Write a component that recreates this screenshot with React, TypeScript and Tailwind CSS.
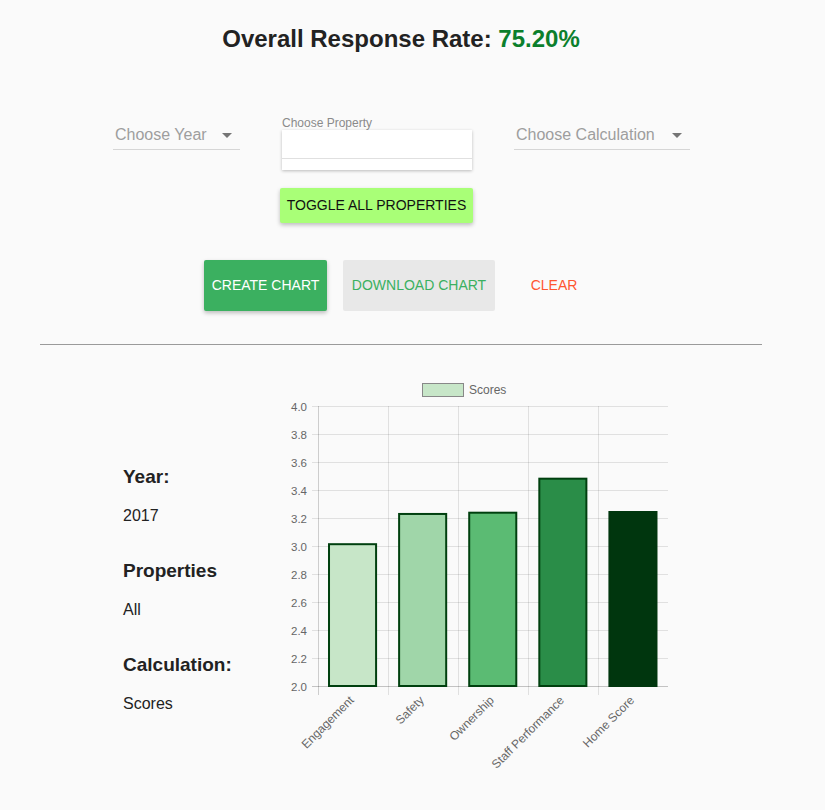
import React from 'react';

const bars = [
    { label: 'Engagement', value: 3.02, fill: '#c7e6c8', stroke: '#00400f' },
    { label: 'Safety', value: 3.236, fill: '#a0d6a9', stroke: '#00400f' },
    { label: 'Ownership', value: 3.245, fill: '#5bbb73', stroke: '#00400f' },
    { label: 'Staff Performance', value: 3.488, fill: '#2a8d48', stroke: '#00400f' },
    { label: 'Home Score', value: 3.25, fill: '#00360e', stroke: '#00360e' },
];

const ticks = [4.0, 3.8, 3.6, 3.4, 3.2, 3.0, 2.8, 2.6, 2.4, 2.2, 2.0];

const left = 317.5;
const right = 668;
const bottom = 686;
const yOf = (v: number) => bottom - (v - 2) * 140;

const Caret = () => (
    <svg width="10" height="5" viewBox="0 0 10 5" className="shrink-0">
        <path d="M0 0 L10 0 L5 5 Z" fill="#757575" />
    </svg>
);

const Chart = () => {
    const cw = (right - left) / bars.length;
    return (
        <svg width="410" height="410" viewBox="270 370 410 410" className="block">
            {/* legend */}
            <rect x="422.5" y="383.5" width="41" height="13" fill="#c7e6c8" stroke="#888" strokeWidth="1" />
            <text x="469" y="393.5" fontSize="12" fill="#666" fontFamily="Liberation Sans, Arial, sans-serif">Scores</text>

            {/* horizontal grid + y labels */}
            {ticks.map((t) => {
                const y = Math.round(yOf(t)) + 0.5;
                return (
                    <g key={t}>
                        <line x1="312" x2={right} y1={y} y2={y} stroke={t === 2 ? 'rgba(0,0,0,0.22)' : 'rgba(0,0,0,0.1)'} />
                        <text x="307" y={y + 4} textAnchor="end" fontSize="11.5" fill="#666" fontFamily="Liberation Sans, Arial, sans-serif">
                            {t.toFixed(1)}
                        </text>
                    </g>
                );
            })}

            {/* vertical grid */}
            {[0, 1, 2, 3, 4].map((i) => {
                const x = Math.round(left + i * cw) + 0.5;
                return <line key={i} x1={x} x2={x} y1="406" y2="695" stroke={i === 0 ? 'rgba(0,0,0,0.18)' : 'rgba(0,0,0,0.1)'} />;
            })}

            {/* bars */}
            {bars.map((b, i) => {
                const cx = left + i * cw + cw / 2;
                const w = cw * 0.7;
                const top = yOf(b.value);
                return (
                    <rect
                        key={b.label}
                        x={cx - w / 2 + 1}
                        y={top + 1}
                        width={w - 2}
                        height={bottom - top - 1}
                        fill={b.fill}
                        stroke={b.stroke}
                        strokeWidth="2"
                    />
                );
            })}

            {/* x labels */}
            {bars.map((b, i) => {
                const cx = left + i * cw + cw / 2 + 2;
                const y = 701;
                return (
                    <text
                        key={b.label}
                        x={cx}
                        y={y}
                        textAnchor="end"
                        fontSize="12"
                        fill="#666"
                        fontFamily="Liberation Sans, Arial, sans-serif"
                        transform={`rotate(-45 ${cx} ${y})`}
                    >
                        {b.label}
                    </text>
                );
            })}
        </svg>
    );
};

export default function App() {
    return (
        <div className="min-h-[810px] w-[825px] bg-[#fafafa] font-['Liberation_Sans',Arial,sans-serif] text-[#222]">
            <h1 className="pr-[23px] pt-[25px] text-center text-[24px] font-bold leading-[28px]">
                Overall Response Rate: <span className="text-[#0b7f2c]">75.20%</span>
            </h1>

            {/* selectors */}
            <div className="mt-[54px] flex items-start pl-[113px]">
                <div className="mt-[14px] flex h-[29px] w-[127px] items-center justify-between border-b border-[#d6d6d6] pl-[2px] pr-[8px]">
                    <span className="text-[16px] text-[#9e9e9e]">Choose Year</span>
                    <Caret />
                </div>

                <div className="ml-[42px] mt-[9px] w-[190px]">
                    <div className="h-[14px] text-[12px] leading-[14px] text-[#8a8a8a]">Choose Property</div>
                    <div className="h-[40px] bg-white shadow-[0_1px_3px_rgba(0,0,0,0.25)]">
                        <div className="h-[29px] border-b border-[#e0e0e0]" />
                    </div>
                    <button className="-ml-[2px] mt-[18px] h-[35px] w-[193px] rounded-[2px] bg-[#a9ff77] text-[14px] uppercase text-[#111] shadow-[0_2px_4px_rgba(0,0,0,0.25)]">
                        Toggle All Properties
                    </button>
                </div>

                <div className="ml-[42px] mt-[14px] flex h-[29px] w-[176px] items-center justify-between border-b border-[#d6d6d6] pl-[2px] pr-[8px]">
                    <span className="text-[16px] text-[#9e9e9e]">Choose Calculation</span>
                    <Caret />
                </div>
            </div>

            {/* actions */}
            <div className="mt-[37px] flex items-center pl-[204px]">
                <button className="h-[51px] w-[123px] rounded-[2px] bg-[#3bb060] text-[14px] uppercase text-white shadow-[0_2px_4px_rgba(0,0,0,0.25)]">
                    Create Chart
                </button>
                <button className="ml-[16px] h-[51px] w-[152px] rounded-[2px] bg-[#e8e8e8] text-[14px] uppercase text-[#3bb060]">
                    Download Chart
                </button>
                <button className="ml-[13px] h-[51px] w-[92px] text-[14px] uppercase text-[#ff5630]">Clear</button>
            </div>

            <hr className="mx-[40px] mt-[33px] w-[722px] border-0 border-t border-[#9a9a9a]" />

            {/* results */}
            <div className="mt-[25px] flex">
                <div className="ml-[123px] w-[147px] pt-[95px]">
                    <div className="text-[19px] font-bold leading-[24px]">Year:</div>
                    <div className="mt-[15px] text-[16px] leading-[24px]">2017</div>
                    <div className="mt-[31px] text-[19px] font-bold leading-[24px]">Properties</div>
                    <div className="mt-[15px] text-[16px] leading-[24px]">All</div>
                    <div className="mt-[31px] text-[19px] font-bold leading-[24px]">Calculation:</div>
                    <div className="mt-[15px] text-[16px] leading-[24px]">Scores</div>
                </div>
                <Chart />
            </div>
        </div>
    );
}
